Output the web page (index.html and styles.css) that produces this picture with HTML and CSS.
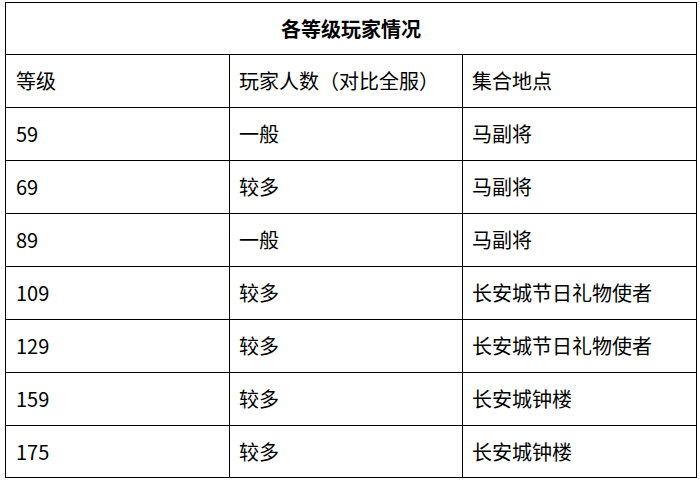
FILE: index.html
```html
<!DOCTYPE html>
<html lang="zh-CN">
<head>
<meta charset="utf-8">
<title>各等级玩家情况</title>
<link rel="stylesheet" href="styles.css">
</head>
<body>
<div class="page">
<table class="levels">
  <colgroup>
    <col class="c1"><col class="c2"><col class="c3">
  </colgroup>
  <tr class="title-row"><th colspan="3">各等级玩家情况</th></tr>
  <tr><td>等级</td><td>玩家人数（对比全服）</td><td>集合地点</td></tr>
  <tr><td>59</td><td>一般</td><td>马副将</td></tr>
  <tr><td>69</td><td>较多</td><td>马副将</td></tr>
  <tr><td>89</td><td>一般</td><td>马副将</td></tr>
  <tr><td>109</td><td>较多</td><td>长安城节日礼物使者</td></tr>
  <tr><td>129</td><td>较多</td><td>长安城节日礼物使者</td></tr>
  <tr><td>159</td><td>较多</td><td>长安城钟楼</td></tr>
  <tr class="short"><td>175</td><td>较多</td><td>长安城钟楼</td></tr>
</table>
</div>
</body>
</html>
```
FILE: styles.css
```css
html, body {
  margin: 0;
  padding: 0;
  background: #ffffff;
}
.page {
  padding: 2px 0 0 5px;
}
.levels {
  border-collapse: collapse;
  table-layout: fixed;
  width: 691px;
  font-family: "Noto Sans CJK SC", "Noto Sans", sans-serif;
  font-size: 20px;
  color: #000000;
}
.levels .c1 { width: 224px; }
.levels .c2 { width: 233px; }
.levels .c3 { width: 234px; }
.levels th,
.levels td {
  border: 1px solid #000000;
  height: 53px;
  padding: 0 9px;
  vertical-align: middle;
  text-align: left;
  line-height: 1.2;
  white-space: nowrap;
  box-sizing: border-box;
}
.levels tr.title-row th,
.levels tr.short td {
  height: 52px;
}
.levels th {
  text-align: center;
  font-weight: bold;
}
.levels td:first-child {
  padding-left: 10px;
}
```
